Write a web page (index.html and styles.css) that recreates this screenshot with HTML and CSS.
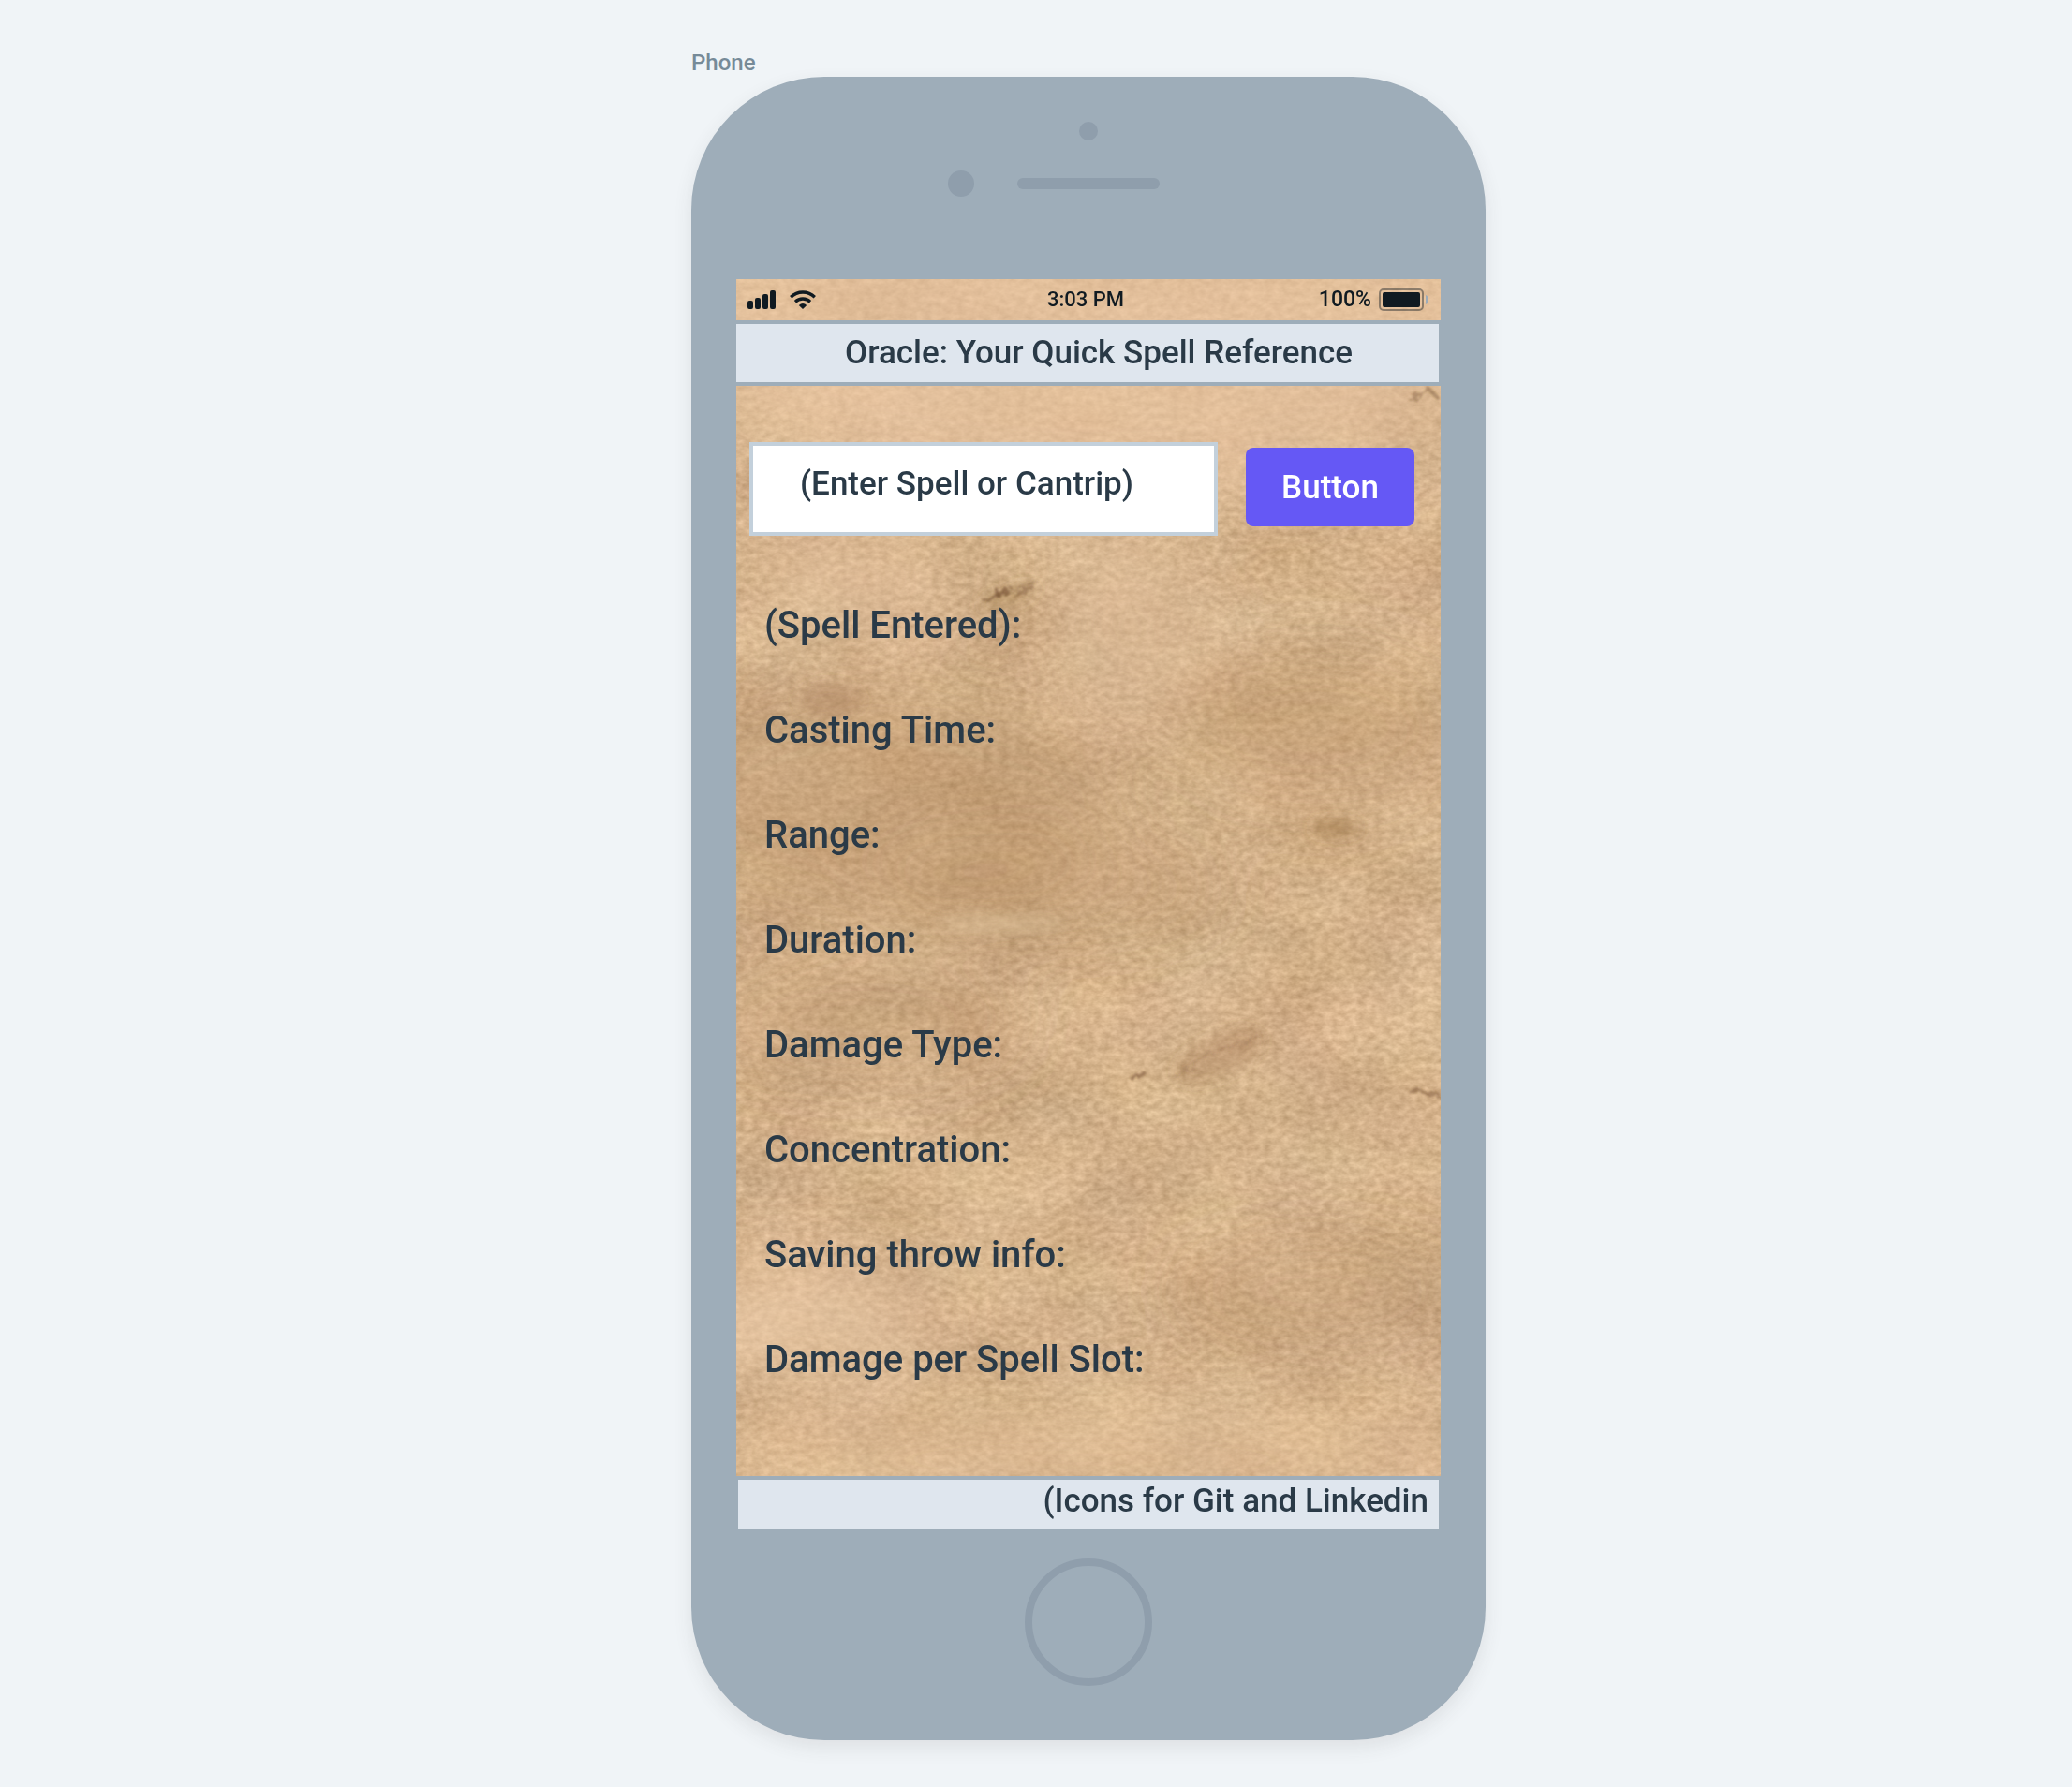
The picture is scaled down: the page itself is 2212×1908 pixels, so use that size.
FILE: index.html
```html
<!DOCTYPE html>
<html lang="en">
<head>
<meta charset="utf-8">
<meta name="viewport" content="width=device-width, initial-scale=1">
<title>Oracle: Your Quick Spell Reference</title>
<link rel="stylesheet" href="styles.css">
</head>
<body>
<div class="canvas">
  <section class="artboard">
    <h2 class="artboard-label">Phone</h2>
    <div class="phone">
      <div class="phone-top">
        <span class="sensor"></span>
        <div class="speaker-row">
          <span class="camera"></span>
          <span class="speaker"></span>
        </div>
      </div>
      <div class="screen">
        <svg class="paper" aria-hidden="true" width="100%" height="100%" viewBox="0 0 752 1334" preserveAspectRatio="none">
          <defs>
            <filter id="parchment" x="0" y="0" width="100%" height="100%" color-interpolation-filters="sRGB">
              <feTurbulence type="fractalNoise" baseFrequency="0.009 0.012" numOctaves="4" seed="11" result="blotch"/>
              <feColorMatrix in="blotch" type="matrix" values="0.12 0.03 0 0 0.757  0.13 0 0 0 0.635  0.12 0 0.03 0 0.472  0 0 0 0 1" result="base"/>
              <feTurbulence type="fractalNoise" baseFrequency="0.11 0.16" numOctaves="3" seed="5" result="grain"/>
              <feColorMatrix in="grain" type="matrix" values="0.2 0 0 0 0.4  0.2 0 0 0 0.4  0.2 0 0 0 0.4  0 0 0 0 1" result="fine"/>
              <feComposite in="base" in2="fine" operator="arithmetic" k1="0" k2="1" k3="1" k4="-0.5"/>
            </filter>
            <filter id="soft" x="-50%" y="-50%" width="200%" height="200%"><feGaussianBlur stdDeviation="36"/></filter>
            <filter id="smudge" x="-50%" y="-50%" width="200%" height="200%"><feGaussianBlur stdDeviation="7"/></filter>
            <filter id="mark" x="-30%" y="-60%" width="160%" height="220%">
              <feTurbulence type="fractalNoise" baseFrequency="0.12" numOctaves="2" seed="3" result="n"/>
              <feDisplacementMap in="SourceGraphic" in2="n" scale="12"/>
              <feGaussianBlur stdDeviation="1"/>
            </filter>
          </defs>
          <rect width="752" height="1334" filter="url(#parchment)"/>
          <g filter="url(#soft)">
            <ellipse cx="380" cy="60" rx="460" ry="170" fill="#ecc9a6" opacity=".55"/>
            <ellipse cx="120" cy="320" rx="100" ry="50" fill="#ecc9a8" opacity=".4"/>
            <ellipse cx="420" cy="370" rx="70" ry="90" fill="#e6c6a4" opacity=".4"/>
            <ellipse cx="160" cy="560" rx="260" ry="130" fill="#a87d52" opacity=".28"/>
            <ellipse cx="330" cy="650" rx="190" ry="50" fill="#a87d52" opacity=".28"/>
            <ellipse cx="620" cy="480" rx="160" ry="90" fill="#b08458" opacity=".25"/>
            <ellipse cx="130" cy="790" rx="180" ry="60" fill="#a87d52" opacity=".25"/>
            <ellipse cx="620" cy="1080" rx="160" ry="50" fill="#a87d52" opacity=".25"/>
            <ellipse cx="60" cy="1110" rx="150" ry="50" fill="#edcbab" opacity=".6"/>
            <ellipse cx="380" cy="1260" rx="420" ry="50" fill="#e6c29a" opacity=".5"/>
          </g>
          <g filter="url(#smudge)">
            <ellipse cx="285" cy="688" rx="70" ry="9" fill="#e4c8a0" opacity=".5"/>
            <ellipse cx="640" cy="586" rx="26" ry="8" fill="#96703f" opacity=".55"/>
            <ellipse cx="515" cy="830" rx="50" ry="22" fill="#9f744d" opacity=".3" transform="rotate(-25 515 830)"/>
            <ellipse cx="100" cy="450" rx="34" ry="18" fill="#9f744d" opacity=".35"/>
            <ellipse cx="290" cy="340" rx="34" ry="10" fill="#96703f" opacity=".3" transform="rotate(-20 290 340)"/>
          </g>
          <g filter="url(#mark)" fill="none" stroke="#745032" stroke-linecap="round">
            <path d="M266 344L288 332" stroke-width="4" opacity=".6"/>
            <path d="M278 338L322 322M296 338L316 328" stroke-width="2" opacity=".45"/>
            <path d="M424 853l10-5" stroke-width="6" opacity=".6"/>
            <path d="M468 852L505 828L560 808" stroke-width="3" opacity=".2"/>
            <path d="M720 866L750 872" stroke-width="5" opacity=".5"/>
            <path d="M720 128L740 118L748 126" stroke-width="4" opacity=".4"/>
          </g>
        </svg>
        <div class="status-bar">
          <div class="status-left">
            <svg width="30" height="20" viewBox="0 0 30 20" fill="#101a21" role="img" aria-label="Signal">
              <rect x="0" y="11" width="6" height="9" rx="2"/>
              <rect x="8" y="8" width="6" height="12" rx="2"/>
              <rect x="16" y="4" width="6" height="16" rx="2"/>
              <rect x="24" y="0" width="6" height="20" rx="2"/>
            </svg>
            <svg width="28" height="20" viewBox="0 0 28 20" fill="none" stroke="#101a21" role="img" aria-label="Wi-Fi">
              <path d="M1.200 7.200A18.500 18.500 0 0 1 26.800 7.200" stroke-width="3.400"/>
              <path d="M6 12.200A11.600 11.600 0 0 1 22 12.200" stroke-width="3.400"/>
              <path d="M9.800 16Q14 12 18.200 16L14 20Z" fill="#101a21" stroke="none"/>
            </svg>
          </div>
          <span class="status-time">3:03 PM</span>
          <div class="status-right">
            <span>100%</span>
            <svg width="54" height="24" viewBox="0 0 54 24" role="img" aria-label="Battery full">
              <rect x="1" y="1" width="46" height="22" rx="4" fill="none" stroke="#101a21" stroke-opacity=".42" stroke-width="2"/>
              <rect x="4" y="4" width="40" height="16" rx="2" fill="#101a21"/>
              <path d="M50 7Q53 8 53 12Q53 16 50 17Z" fill="#9dacb9"/>
            </svg>
          </div>
        </div>
        <header class="app-header"><h1>Oracle: Your Quick Spell Reference</h1></header>
        <main class="content">
          <form class="search">
            <input class="search-field" type="text" aria-label="Spell or cantrip" placeholder="(Enter Spell or Cantrip)">
            <button class="search-button" type="button">Button</button>
          </form>
          <ul class="details">
            <li>(Spell Entered):</li>
            <li>Casting Time:</li>
            <li>Range:</li>
            <li>Duration:</li>
            <li>Damage Type:</li>
            <li>Concentration:</li>
            <li>Saving throw info:</li>
            <li>Damage per Spell Slot:</li>
          </ul>
        </main>
        <footer class="app-footer">(Icons for Git and Linkedin</footer>
      </div>
      <div class="home"></div>
    </div>
  </section>
</div>
</body>
</html>
```
FILE: styles.css
```css
* { box-sizing: border-box; }

body {
  margin: 0;
  min-height: 100vh;
  background: #f0f4f7;
  color: #2a3a47;
  font-family: Roboto, "Liberation Sans", sans-serif;
  font-weight: 500;
}

.canvas {
  display: flex;
  justify-content: center;
  padding: 52px 0 50px 112px;
}

.artboard {
  width: 100%;
  max-width: 848px;
}

.artboard-label {
  margin: 0;
  color: #768a98;
  font-size: 24px;
  font-weight: 500;
  line-height: 30px;
}

.phone {
  padding: 48px 48px 58px;
  border-radius: 142px;
  background: #9eadb9;
  box-shadow: 0 8px 20px rgba(60, 60, 60, 0.1);
}

.phone-top {
  display: flex;
  flex-direction: column;
  align-items: center;
  gap: 32px;
  padding-bottom: 88px;
}

.sensor {
  width: 20px;
  height: 20px;
  border-radius: 50%;
  background: #8f9eac;
}

.speaker-row {
  display: grid;
  grid-template-columns: 1fr 152px 1fr;
  align-items: center;
  width: 100%;
}

.camera {
  justify-self: end;
  width: 28px;
  height: 28px;
  margin-right: 46px;
  border-radius: 50%;
  background: #8f9eac;
}

.speaker {
  height: 12px;
  border-radius: 6px;
  background: #8f9eac;
}

.screen {
  position: relative;
  isolation: isolate;
}

.paper {
  position: absolute;
  inset: 0;
  z-index: -1;
}

.status-bar {
  display: grid;
  grid-template-columns: 1fr auto 1fr;
  align-items: center;
  height: 44px;
  padding: 0 12px;
  color: #101a21;
  font-size: 23px;
  line-height: 26px;
}

.status-time {
  margin-right: 6px;
  font-size: 22px;
}

.status-left,
.status-right {
  display: flex;
  align-items: center;
  gap: 15px;
}

.status-right {
  justify-content: flex-end;
  gap: 8px;
}

.app-header {
  padding: 8px 0 8px 24px;
  border: solid #9eadb9;
  border-width: 4px 2px 4px 0;
  background: #dfe6ee;
  text-align: center;
}

.app-header h1 {
  margin: 0;
  font-size: 35px;
  font-weight: 500;
  line-height: 46px;
}

.content {
  padding: 60px 28px 68px 14px;
}

.search {
  display: flex;
  align-items: center;
  gap: 30px;
}

.search-field {
  flex: 1;
  min-width: 0;
  height: 100px;
  padding: 0 8px 12px 50px;
  border: 4px solid #c3d0db;
  border-radius: 0;
  background: #fff;
  color: #2a3a47;
  font: inherit;
  font-size: 35px;
}

.search-field::placeholder {
  color: #2a3a47;
  opacity: 1;
}

.search-button {
  width: 180px;
  height: 84px;
  margin-bottom: 4px;
  border: 0;
  border-radius: 8px;
  background: #6558f5;
  color: #fff;
  font: inherit;
  font-size: 35px;
}

.details {
  margin: 40px 0 0;
  padding: 0 0 0 16px;
  list-style: none;
  font-size: 40px;
  line-height: 112px;
}

.app-footer {
  padding: 0 11px 6px;
  border: solid #9eadb9;
  border-width: 4px 2px 0;
  background: #dfe6ee;
  font-size: 35px;
  line-height: 46px;
  text-align: right;
}

.home {
  width: 136px;
  height: 136px;
  margin: 32px auto 0;
  border: 8px solid #8f9eac;
  border-radius: 50%;
}
```
